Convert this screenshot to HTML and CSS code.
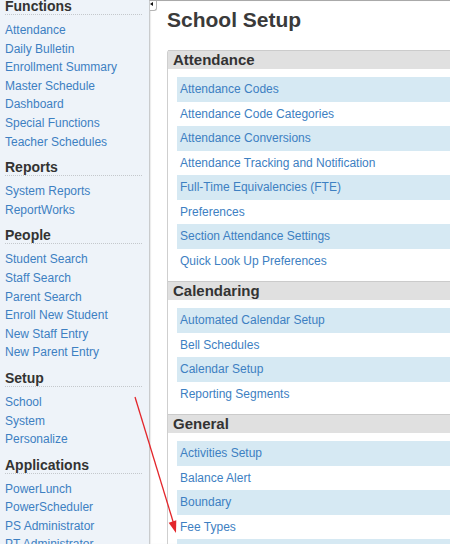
FILE: index.html
```html
<!DOCTYPE html>
<html lang="en">

<head>
    <meta charset="UTF-8">
    <title>School Setup</title>
    <link rel="stylesheet" href="styles.css">
</head>

<body>
    <div class="page">
        <div class="sidebar">
            <h3 class="nav-title first">Functions</h3>
            <ul class="nav-list">
                <li><a href="#">Attendance</a></li>
                <li><a href="#">Daily Bulletin</a></li>
                <li><a href="#">Enrollment Summary</a></li>
                <li><a href="#">Master Schedule</a></li>
                <li><a href="#">Dashboard</a></li>
                <li><a href="#">Special Functions</a></li>
                <li><a href="#">Teacher Schedules</a></li>
            </ul>
            <h3 class="nav-title">Reports</h3>
            <ul class="nav-list">
                <li><a href="#">System Reports</a></li>
                <li><a href="#">ReportWorks</a></li>
            </ul>
            <h3 class="nav-title">People</h3>
            <ul class="nav-list">
                <li><a href="#">Student Search</a></li>
                <li><a href="#">Staff Search</a></li>
                <li><a href="#">Parent Search</a></li>
                <li><a href="#">Enroll New Student</a></li>
                <li><a href="#">New Staff Entry</a></li>
                <li><a href="#">New Parent Entry</a></li>
            </ul>
            <h3 class="nav-title">Setup</h3>
            <ul class="nav-list">
                <li><a href="#">School</a></li>
                <li><a href="#">System</a></li>
                <li><a href="#">Personalize</a></li>
            </ul>
            <h3 class="nav-title">Applications</h3>
            <ul class="nav-list">
                <li><a href="#">PowerLunch</a></li>
                <li><a href="#">PowerScheduler</a></li>
                <li><a href="#">PS Administrator</a></li>
                <li><a href="#">PT Administrator</a></li>
            </ul>
        </div>

        <div class="main">
            <!-- collapse toggle for the nav -->
            <div class="nav-toggle"><span class="nav-toggle-arrow"></span></div>

            <h1 class="page-title">School Setup</h1>

            <div class="setup-box">
                <h2 class="group-title">Attendance</h2>
                <ul class="group-list">
                    <li><a href="#">Attendance Codes</a></li>
                    <li><a href="#">Attendance Code Categories</a></li>
                    <li><a href="#">Attendance Conversions</a></li>
                    <li><a href="#">Attendance Tracking and Notification</a></li>
                    <li><a href="#">Full-Time Equivalencies (FTE)</a></li>
                    <li><a href="#">Preferences</a></li>
                    <li><a href="#">Section Attendance Settings</a></li>
                    <li><a href="#">Quick Look Up Preferences</a></li>
                </ul>

                <h2 class="group-title">Calendaring</h2>
                <ul class="group-list">
                    <li><a href="#">Automated Calendar Setup</a></li>
                    <li><a href="#">Bell Schedules</a></li>
                    <li><a href="#">Calendar Setup</a></li>
                    <li><a href="#">Reporting Segments</a></li>
                </ul>

                <h2 class="group-title">General</h2>
                <ul class="group-list">
                    <li><a href="#">Activities Setup</a></li>
                    <li><a href="#">Balance Alert</a></li>
                    <li><a href="#">Boundary</a></li>
                    <li><a href="#">Fee Types</a></li>
                    <li><a href="#">Fees Setup</a></li>
                </ul>
            </div>
        </div>
    </div>

    <!-- annotation arrow drawn over the screenshot -->
    <svg class="annotation" width="450" height="544" viewBox="0 0 450 544">
        <line x1="135" y1="397" x2="173.5" y2="523" stroke="#e3262b" stroke-width="1.3" />
        <polygon points="176,533 168.7,522.7 176.3,520.3" fill="#e3262b" />
    </svg>
</body>

</html>
```

FILE: styles.css
```css
body {
    margin: 0;
    overflow: hidden;
    font-family: "Liberation Sans", Arial, sans-serif;
    background-color: #fff;
}

a {
    color: #3d80c2;
    text-decoration: none;
}

.page {
    display: flex;
    height: 544px;
}

.sidebar {
    width: 149px;
    flex: none;
    box-sizing: border-box;
    padding: 0 7px 0 5px;
    background-color: #eef3f9;
}

.nav-title {
    margin: 8px 0 6px 0;
    font-size: 14px;
    line-height: 16px;
    font-weight: bold;
    color: #333;
    border-bottom: 1px dotted #c4c8cc;
}

.nav-title.first {
    margin-top: -2px;
}

.nav-list {
    list-style: none;
    margin: 0;
    padding: 0;
}

.nav-list li {
    font-size: 12px;
    line-height: 18.6px;
    white-space: nowrap;
}

.main {
    flex: 1;
    position: relative;
    overflow: hidden;
    border-top: 1px solid #a9a9a9;
    border-left: 1px solid #c9cbcd;
    box-shadow: inset 1px 0 1px rgba(0, 0, 0, 0.08);
    padding: 7px 0 0 17px;
}

.nav-toggle {
    position: absolute;
    top: 0;
    left: 0;
    width: 6px;
    height: 9px;
    background-color: #fff;
    border-right: 1px solid #b5b5b5;
    border-bottom: 1px solid #b5b5b5;
    border-bottom-right-radius: 3px;
}

.nav-toggle-arrow {
    position: absolute;
    top: 1px;
    left: 0;
    width: 0;
    height: 0;
    border-top: 2px solid transparent;
    border-bottom: 2px solid transparent;
    border-right: 3px solid #111;
}

.page-title {
    margin: 0 0 18px 0;
    font-size: 21px;
    line-height: 24px;
    font-weight: bold;
    color: #3a3a3a;
}

.setup-box {
    width: 420px;
    border-left: 1px solid #cfcfcf;
    border-top-left-radius: 3px;
}

.group-title {
    margin: 0;
    padding-left: 5px;
    height: 18px;
    font-size: 15px;
    line-height: 18px;
    font-weight: bold;
    color: #333;
    background-color: #e0e0e0;
    border-top: 1px solid #cbcbcb;
}

.group-list {
    list-style: none;
    margin: 0;
    padding: 8px 0 8px 9px;
}

.group-list li {
    height: 24.5px;
    line-height: 24.5px;
    padding-left: 3px;
    font-size: 12px;
    white-space: nowrap;
}

.group-list li:nth-child(odd) {
    background-color: #d6e9f3;
}

.annotation {
    position: absolute;
    top: 0;
    left: 0;
    pointer-events: none;
}
```
